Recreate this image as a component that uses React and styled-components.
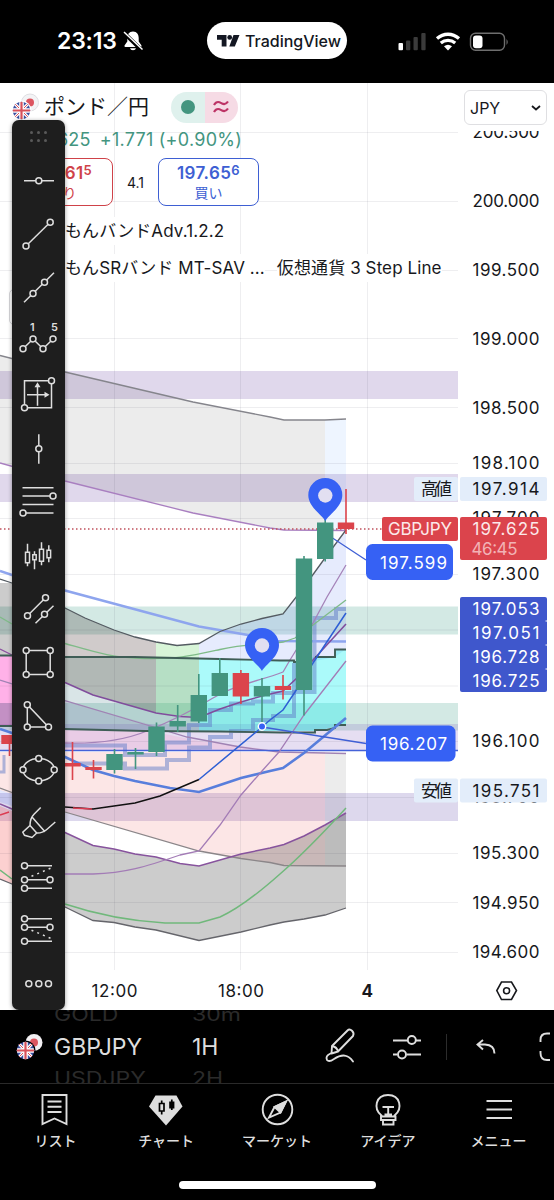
import styled, { createGlobalStyle } from 'styled-components';

const GREEN = '#43957f';
const RED = '#db444c';
const BLUE = '#3661f4';

const priceTicks = [
  ['200.500', 132.5],
  ['200.000', 201.5],
  ['199.500', 270.5],
  ['199.000', 339],
  ['198.500', 408],
  ['198.100', 463.5],
  ['197.700', 518.5],
  ['197.300', 574.5],
  ['196.100', 741.5],
  ['195.700', 797.5],
  ['195.300', 853.5],
  ['194.950', 903],
  ['194.600', 952.5],
];
const gridRows = [132.5, 201.5, 270.5, 338.5, 407.5, 463.5, 518.5, 574.5, 630, 686, 741.5, 797.5, 853.5, 902.5, 952.5];
const gridCols = [114.5, 240.5, 367.5];

const bands = [
  [371, 28, '#e0d8ec'],
  [474, 28, '#e0d8ec'],
  [606.5, 28, '#d3e9e4'],
  [703, 27.5, '#d3e9e4'],
  [724, 27, 'rgba(130, 90, 190, 0.2)'],
  [793, 28, '#ddd8ed'],
];

// x, body top, body bottom, wick top, wick bottom, rising
const candles = [
  [9.5, 735, 744, 735, 756, false],
  [72.5, 763, 766.5, 742, 780, false],
  [93.5, 767, 770, 760, 778.5, false],
  [114.5, 754, 770, 749, 773.5, true],
  [135.5, 752, 754.5, 748, 769, true],
  [156.5, 726.5, 752, 722.5, 756, true],
  [177.7, 721, 726.5, 705, 732, true],
  [198.8, 695, 721.5, 674, 723, true],
  [219.8, 673, 696, 658, 696, true],
  [240.9, 673, 696.5, 670, 704, false],
  [262, 686, 696.5, 678, 725, true],
  [283, 686, 690, 675, 699.5, false],
  [304, 558.5, 690, 556, 715.5, true],
  [325.2, 522.5, 559, 519, 561.5, true],
  [346, 522.5, 529, 489, 534, false],
];

const upperEnvelope = '65,608 85,618 114,630 135,637 156,642 177,645.5 199,643.5';
const upperRise = '199,643.5 220,631.5 241,624 262,618.5 283,614 304,587 325,558 346,530';
const midPurple = '65,682.5 93,695 114,701 156,713 180,716.5 199,717.5';
const lowerTop = '65,832.5 93,845.5 114,849 135,854 156,857 180,863.5 199,866 241,854 270,848 284,844.5 304,836 325,825 346,813';
const lowerBottom = '346,908 325,915 304,919 284,922 270,925 241,932 199,940.5 156,930 135,927 114,922.5 93,920.5 65,907';

function Pin({ x, y }) {
  return (
    <g transform={`translate(${x} ${y})`}>
      <path d="M0 25C-3 19-17 11-17 -1A17 17 0 0 1 17 -1C17 11 3 19 0 25Z" fill={BLUE} />
      <circle cy="-.5" r="7.2" fill="#e2dff1" />
    </g>
  );
}

function AxisText({ y, children, fill = '#17181c', ...rest }) {
  return (
    <text x="472.5" y={y + 5.8} fill={fill} textLength="67" {...rest}>{children}</text>
  );
}

function PriceChart() {
  return (
    <Plot viewBox="0 83 554 927">
      {bands.map(([y, h, fill]) => <rect key={y} y={y} width="458" height={h} fill={fill} />)}

      {/* grey and tinted clouds */}
      <polygon points="0,355.5 65,372 193,402 270,417 284,420 325,420 325,530.5 284,530 270,528 193,513 65,481 0,463" fill="rgba(0,0,0,.075)" />
      <rect x="325" y="420" width="21" height="110" fill="rgba(70,140,250,.09)" />
      <rect x="0" y="583" width="12" height="72" fill="rgba(0,0,0,.2)" />
      <rect x="0" y="655" width="12" height="72" fill="rgba(255,40,190,.36)" />
      <rect x="0" y="703" width="12" height="24" fill="rgba(70,70,120,.2)" />
      <polygon points={`${upperEnvelope.replace(' 177,645.5 199,643.5', '')} 156,713 114,701 93,695 65,682.5`} fill="rgba(40,20,20,.22)" />
      <polygon points="65,657 156,657 156,713 114,701 93,695 65,682.5" fill="rgba(20,90,70,.16)" />
      <polygon points="65,682.5 93,695 114,701 156,713 199,717.5 199,731 65,729" fill="rgba(30,100,110,.17)" />
      <polygon points="156,642 177,645.5 199,643.5 199,717.5 156,713" fill="rgba(90,215,90,.24)" />
      <polygon points="156,657 199,657 199,717.5 156,713" fill="rgba(30,130,110,.18)" />
      <polygon points={`${upperRise} 346,649 335,657 315,661 199,658`} fill="rgba(60,100,240,.13)" />
      <polygon points="199,658 294,661 315,657 335,657 335,649 346,649 346,725 315,731 199,731" fill="rgba(0,240,240,.33)" />
      <polygon points="65,729 150,731 200,741 279,751 65,751" fill="rgba(250,120,170,.17)" />
      <polygon points="65,701 156,726 150,731 65,729" fill="rgba(120,60,180,.1)" />
      <polygon points="0,752 325,752 325,866 284,865.5 270,862.5 241,858.5 199,851 65,812 0,790" fill="rgba(230,60,60,.13)" />
      <rect x="325" y="754" width="21" height="112" fill="rgba(0,0,0,.075)" />
      <polygon points="0,790 12,794 12,806 0,802" fill="rgba(60,90,240,.14)" />
      <polygon points="0,806 12,811 12,884 0,879" fill="rgba(240,50,50,.23)" />
      <polygon points={`${lowerTop} ${lowerBottom}`} fill="rgba(0,0,0,.2)" />

      <g stroke="#2a2a40" strokeOpacity=".08">
        {gridRows.map(y => <path key={y} d={`M0 ${y}H458`} />)}
        {gridCols.map(x => <path key={x} d={`M${x} 83V970`} />)}
      </g>

      {/* stepped averages */}
      <g fill="none" stroke="#5f7cc8" strokeOpacity=".5" strokeWidth="4">
        <path d="M65 745.5H125V755H165V742.5H189V725H210V710H231V703.5H253V701.5H273V693H294V663" />
        <path d="M73 763.5H125V768.5H167V760H189V747.5H210V737H231V731H253V720H273V716H294V692H314.5V618H336V609H346" />
        <path d="M0 772H4V755" strokeWidth="3" />
      </g>

      <g fill="none" strokeWidth="1.3">
        <polyline points="0,355.5 65,372 193,402 270,417 284,420 325,420 346,419" stroke="#85858c" />
        <polyline points="0,463 65,481 193,513 270,528 284,530 346,530.5" stroke="#a97fc0" />
        <polyline points="0,571 12,575 65,590.5 199,626.5 248,635 275,641 346,641.5" stroke="#8ea5ee" strokeWidth="2.4" />
        <polyline points={`0,579 12,583 ${upperEnvelope} ${upperRise}`} stroke="#545b62" />
        <path d="M0 617 12 624M65 643.5C95 652 112 658 145 658.500S190 656 220 649.500S265 645 283 642L295 638 313 625 346 600" stroke="#7fbb88" />
        <polyline points="0,649 12,655 " stroke="#8d4fa0" />
        <polyline points={`${midPurple} 220,709 241,702 262,696 283,691 298,677 313,660 346,624`} stroke="#804d9c" strokeWidth="1.6" />
        <polyline points="0,680 65,700.7 147,725 187,737 240,747 279,752 346,753.5" stroke="#a083b4" />
        <path d="M65 743C100 744 125 740 147 731S190 712 213 698S260 681 283 672L290 660 313 623 327 597 346 565" stroke="#a583b9" />
        <path d="M0 655.500H12M65 657H134L220 659 280 660.500H294V662H304M315 657H335V649.500H346" stroke="#3f5d56" strokeWidth="1.9" />
        <path d="M0 726H12M65 729L145 731 220 731.500 280 732.500H315V730H327L335 728V725H346" stroke="#3f5d56" strokeWidth="1.9" />
        <path d="M0 750.500H458" stroke="#4562d8" strokeWidth="1.6" />
        <polyline points="0,729 12,733 65,757 93,770 114,776 135,781 170,788 199,792 220,785 241,778 270,771 283,768 304,753 346,718" stroke="#587edc" strokeWidth="2.6" />
        <polyline points="65,807 93,809 114,806 135,803 160,796 199,779.5" stroke="#111" strokeWidth="1.5" />
        <path d="M73 808 92 809M0 815 9 812" stroke="#dc3b51" strokeWidth="1.6" />
        <polyline points="199,779.5 262,727 270,720 283,710 295,692 313,663 346,613" stroke="#2e5fd4" strokeWidth="1.5" />
        <polyline points="0,788 65,812 199,851 241,858.5 270,862.5 284,865.5 346,866" stroke="#8b8689" />
        <polyline points={`0,804 12,809 ${lowerTop}`} stroke="#87539d" strokeWidth="1.5" />
        <polyline points="0,879 12,884 65,907 93,920.5 114,922.5 135,927 156,930 199,940.5 241,932 270,925 284,922 304,919 325,915 346,908" stroke="#65656b" />
        <path d="M65 874H93C125 873 145 867 180 855L199 851 220 825 241 795 262 771 279 752 304 715 325 688 346 661" stroke="#a37cb6" />
        <path d="M0 870 12 879M65 904C98 915 130 921 165 923H199L220 917C240 908 262 890 280 874C302 855 325 831 346 808" stroke="#70b87b" strokeWidth="1.5" />
        <path d="M262 727 366 743.500M331 537 366 560" stroke="#3f5fd5" />
        <path d="M0 529H382" stroke="#c0505c" strokeDasharray="1.5 2.5" strokeWidth="1.5" />
      </g>

      {candles.map(([x, top, bottom, high, low, up]) => (
        <g key={x} fill={up ? GREEN : RED}>
          <rect x={x - 0.8} y={high} width="1.6" height={low - high} />
          <rect x={x - 8.2} y={top} width="16.4" height={bottom - top} />
        </g>
      ))}

      <Pin x={325.3} y={496} />
      <Pin x={262} y={646} />
      <circle cx="262" cy="726.5" r="3.7" fill={BLUE} stroke="#fff" strokeWidth="1.4" />

      <rect x="366" y="544" width="87" height="36" rx="6.500" fill={BLUE} />
      <rect x="366" y="725.500" width="89.500" height="36" rx="6.500" fill={BLUE} />
      <text x="380" y="568.5" fill="#fff" textLength="67">197.599</text>
      <text x="380" y="750" fill="#fff" textLength="67">196.207</text>

      {priceTicks.map(([label, y]) => <AxisText key={label} y={y}>{label}</AxisText>)}
      <rect x="460" y="83" width="94" height="48" fill="#fff" />

      <rect x="414" y="477" width="44" height="24" rx="2" fill="#e3edfa" />
      <rect x="460" y="477" width="87" height="24" rx="2" fill="#e3edfa" />
      <text x="421" y="495" fill="#17181c" textLength="31">高値</text>
      <AxisText y={489.5}>197.914</AxisText>
      <rect x="414" y="778.500" width="44" height="24" rx="2" fill="#e3edfa" />
      <rect x="460" y="778.500" width="87" height="24" rx="2" fill="#e3edfa" />
      <text x="421" y="797" fill="#17181c" textLength="31">安値</text>
      <AxisText y={791}>195.751</AxisText>

      <rect x="382" y="517" width="76" height="24" rx="2" fill={RED} />
      <rect x="460" y="517" width="87" height="43" rx="2" fill={RED} />
      <text x="388" y="535" fill="#fbe9ea" textLength="64">GBPJPY</text>
      <AxisText y={529.5} fill="#fbe9ea">197.625</AxisText>
      <text x="471.5" y="555" fill="#f2b3b6" textLength="46">46:45</text>

      <rect x="460" y="597" width="87" height="95" rx="2" fill="#3f57cc" />
      <AxisText y={609.5} fill="#fff">197.053</AxisText>
      <AxisText y={633.5} fill="#fff">197.051</AxisText>
      <AxisText y={657.5} fill="#fff">196.728</AxisText>
      <AxisText y={681.5} fill="#fff">196.725</AxisText>
      <path d="M545.500 621H547M545.500 645H547M545.500 669H547" stroke="#fff" />

      <text x="91.500" y="997" fill="#17181c" textLength="46">12:00</text>
      <text x="218" y="997" fill="#17181c" textLength="46">18:00</text>
      <text x="361.500" y="997" fill="#17181c" fontWeight="700">4</text>
      <g fill="none" stroke="#17181c" strokeWidth="1.6">
        <path d="M501.500 982H511.500L516.500 990.500 511.500 999.500H501.500L496.800 990.500Z" />
        <circle cx="506.600" cy="990.700" r="3" />
      </g>
    </Plot>
  );
}

function Flags({ dark }) {
  return (
    <FlagSvg viewBox="0 0 28 28" $dark={dark}>
      <circle cx="18" cy="9.500" r="8.500" fill={dark ? '#f3f0f3' : '#f3f3f5'} stroke={dark ? 'none' : '#dfdfe3'} />
      <circle cx="18" cy="9.500" r="4" fill="#dc5560" />
      <circle cx="9.500" cy="17.500" r="10" fill={dark ? '#000' : '#fff'} />
      <clipPath id={dark ? 'ukDark' : 'ukLight'}><circle cx="9.500" cy="17.500" r="8.700" /></clipPath>
      <g clipPath={`url(#${dark ? 'ukDark' : 'ukLight'})`}>
        <rect y="8" width="20" height="20" fill="#3b4fa0" />
        <path d="M1 9 18 26M18 9 1 26" stroke="#fff" strokeWidth="3" />
        <path d="M1 9 18 26M18 9 1 26" stroke="#d8505a" strokeWidth="1" />
        <path d="M9.500 8V27M0 17.500H19" stroke="#fff" strokeWidth="4.600" />
        <path d="M9.500 8V27M0 17.500H19" stroke="#d8505a" strokeWidth="2.200" />
      </g>
    </FlagSvg>
  );
}

function Dots({ at }) {
  return at.map(([x, y]) => <circle key={`${x},${y}`} cx={x} cy={y} r="3" fill="#1e1e1e" />);
}

// every drawing tool is centred on 0,0
const tools = [
  { path: 'M-14.500 0H15.500', dots: [[0.3, 0]] },
  { path: 'M-12.500 11.300 11.700 -12.500', dots: [[-12.5, 11.3], [11.7, -12.5]] },
  { path: 'M-14.500 14.500 15.500 -15', dots: [[-5.5, 5.7], [6, -5.5]] },
  { path: 'M-15.500 7-5.500-2.800 4.500 7 14.500-2.800', dots: [[-15.5, 7], [-5.5, -2.8], [4.5, 7], [14.5, -2.8]], labels: [['1', -8.5], ['5', 12.5]] },
  { path: 'M-14-14H13V13H-14ZM-1 11V-10M-11.500 0H9', dots: [[13, -14], [-14, 13]], solid: 'M-1-12.500 2-7.500H-4ZM11 0 6-3V3Z' },
  { path: 'M.300-14.500V15', dots: [[0.3, 0]] },
  { path: 'M-16-14H15M-16-5.700H15M-16 2.700H15M-16 11.300H15', dots: [[14.5, -5.7], [-15.5, 11.3]] },
  { path: 'M-11-12V-4M-11 7.500V10.500M-13-3.500H-9V7H-13ZM-4-4.500V-1M-4 4V13.500M-5.700-1H-2.300V4H-5.700ZM3-13.500V-6.500M3 5.500V9.500M1-6.500H5V5.500H1ZM10.300-10.500V-5.500M10.300 2V6.500M8.500-5.500H12.100V2H8.500Z', dots: [] },
  { path: 'M-11 7 7-11M-3 14.500 15-3', dots: [[-11, 7], [7, -11], [6, 5.5]] },
  { path: 'M-12.300-12.300H11.700V11.700H-12.300Z', dots: [[-12.3, -12.3], [11.7, -12.3], [11.7, 11.7], [-12.3, 11.7]] },
  { path: 'M-11.200-11V11.300H10Z', dots: [[-11.2, -11], [-11.2, 11.3], [10, 11.3]] },
  { path: 'M-15.500 0A15.700 11.200 0 0 1 15.900 0A15.700 11.200 0 0 1-15.500 0Z', dots: [[-15.5, 0], [0.2, -11.2], [15.7, 0], [0.2, 11.2]] },
  { path: 'M2.200-15.300-4.500-8.500Q-8.500-4.500-8.500 2.700L-15.700 9.500-14 12.500-6.500 14.700-1.800 10.300-8.500 2.700M-6.300-5.500 6.500 9M-1.800 10.300Q4 10.500 8 7L16.800-.7', dots: [] },
  { path: 'M-14-11H13.500M-14 3H11.500M-14 11.500H13.500', dots: [[-14, -11], [-14, 3], [11.5, 3], [-14, 11.5]], dotted: 'M-7-.5 12-8.500' },
  { path: 'M-14-11H13.500M-14-2.500H11.500M-14 11.500H13.500', dots: [[-14, -11], [-14, -2.5], [11.5, -2.5], [-14, 11.5]], dotted: 'M-7 .5 12 8.500' },
  { path: '', dots: [[-9.7, 0], [0.3, 0], [10, 0]] },
];

function DrawingTools() {
  return (
    <ToolPanel>
      <Handle viewBox="0 0 53 34" fill="#5a5a5a">
        {[19.5, 26.5, 33.5].map(x => [12.5, 20.5].map(y => <circle key={x + y} cx={x} cy={y} r="1.5" />))}
      </Handle>
      {tools.map(({ path, dots, labels, solid, dotted }, i) => (
        <ToolIcon key={i} viewBox="-26.5 -26.75 53 53.5">
          <path d={path} />
          {dotted && <path d={dotted} strokeDasharray="2 4.200" />}
          {solid && <path d={solid} fill="#dedede" stroke="none" />}
          <Dots at={dots} />
          {labels && labels.map(([label, x]) => (
            <text key={label} x={x} y="-10.500" fill="#dedede" stroke="none" fontSize="11" fontWeight="600">{label}</text>
          ))}
        </ToolIcon>
      ))}
    </ToolPanel>
  );
}

function StatusBar() {
  return (
    <Status>
      <Clock>
        <time>23:13</time>
        <svg width="20" height="20" viewBox="0 0 20 20">
          <path d="M10 .5C6 .5 4.300 3.500 4.300 7V10.500L1.500 14.500Q1.200 16 2.500 16H17.500Q18.800 16 18.500 14.500L15.700 10.500V7C15.700 3.500 14 .5 10 .5ZM7 17.300H13Q12.500 19.300 10 19.300T7 17.300Z" fill="#fff" />
          <path d="M.5 1.500 19 19.500" stroke="#000" strokeWidth="4" />
          <path d="M1 1 19.500 18.500" stroke="#fff" strokeWidth="1.500" />
        </svg>
      </Clock>
      <Island>
        <svg width="23" height="12" viewBox="0 0 23 12" fill="#131722">
          <path d="M0 0H9.500V11.500H4.700V4.700H0ZM16.500 0H22.500L17.800 11.500H12.300Z" />
          <circle cx="12.700" cy="2.400" r="2.400" />
        </svg>
        <Brand>TradingView</Brand>
      </Island>
      <Signals viewBox="0 0 112 20">
        <rect x="1.500" y="11" width="4.500" height="7.300" rx="1" fill="#fff" />
        <g fill="#3b3b3b">
          <rect x="9" y="8.500" width="4.300" height="9.800" rx="1" />
          <rect x="16.500" y="5" width="4.300" height="13.300" rx="1" />
          <rect x="24.300" y="1" width="4.300" height="17.300" rx="1" />
        </g>
        <g fill="none" stroke="#fff" strokeWidth="3.300">
          <path d="M40 6.500C46.500 .8 55.500 .8 62 6.500M43.800 11C48 7.500 54 7.500 58.200 11" />
        </g>
        <path d="M47 14.200Q51 11.200 55 14.200L51 18.500Z" fill="#fff" />
        <rect x="73.500" y="1.300" width="34" height="17" rx="5" fill="none" stroke="#6e6e6e" strokeWidth="1.400" />
        <rect x="76" y="3.600" width="9.500" height="12.600" rx="3" fill="#fff" />
        <path d="M109.500 7Q112 10 109.500 13Z" fill="#6e6e6e" />
      </Signals>
    </Status>
  );
}

function Legend() {
  return (
    <LegendBox>
      <TitleRow>
        <Flags />
        <Title>ポンド／円</Title>
        <StatusPill>
          <PillHalf $bg="#dff1ed"><Bullet /></PillHalf>
          <PillHalf $bg="#f6dbe5">
            <svg width="16" height="14" viewBox="0 0 16 14" fill="none" stroke="#bd3466" strokeWidth="2.200">
              <path d="M1 5C4 0 7 2.500 9 3.500S13 4.500 15 1.500M1 12C4 7 7 9.500 9 10.500S13 11.500 15 8.500" />
            </svg>
          </PillHalf>
        </StatusPill>
      </TitleRow>
      <Change><span>197.625</span><span>+1.771 (+0.90%)</span></Change>
      <Quotes>
        <Quote $color="#cf4249">
          <Amount>197.61<small>5</small></Amount>
          <Side>売り</Side>
        </Quote>
        <Spread>4.1</Spread>
        <Quote $color="#3e5fd3">
          <Amount>197.65<small>6</small></Amount>
          <Side>買い</Side>
        </Quote>
      </Quotes>
      <Indicator><Name $track="0.1px">もんバンドAdv.1.2.2</Name></Indicator>
      <Indicator>
        <Name $track="0.1px">もんSRバンド MT-SAV ...</Name>
        <Name $track="0.1px">仮想通貨 3 Step Line</Name>
      </Indicator>
    </LegendBox>
  );
}

function BottomBar() {
  return (
    <Bar>
      <Flags dark />
      <Wheel $width={138}>
        <Faded>GOLD</Faded>
        <Current>GBPJPY</Current>
        <Faded>USDJPY</Faded>
      </Wheel>
      <Wheel $width={130}>
        <Faded>30m</Faded>
        <Current>1H</Current>
        <Faded>2H</Faded>
      </Wheel>
      <BarIcons viewBox="0 0 231 73" fill="none" stroke="#dedede" strokeWidth="1.900">
        <path d="M9 36 24.500 20.500Q26.500 18.500 29 20.800T30 26L15 41.500 8.500 43.500ZM9 36Q14 37 15 41.500" strokeLinejoin="round" />
        <path d="M7.500 43.500Q2 46 4 50Q6 52.500 11 49Q23 41 30 51.500" strokeLinecap="round" />
        <path d="M70 30.500H84.500M93 30.500H98M70 44.500H74.500M83.500 44.500H98" />
        <circle cx="88.800" cy="30" r="4" />
        <circle cx="79" cy="44.500" r="4" />
        <path d="M123.500 24V50" stroke="#2c2c2c" strokeWidth="1" />
        <path d="M160 30 154.500 34.500 160 39.500M154.500 34.500H162Q171.500 35 171.500 43.500" />
        <path d="M217.500 32V30Q217.500 23.500 224 23.500H227M217.500 41V43Q217.500 50 224 50H227" />
      </BarIcons>
    </Bar>
  );
}

const navItems = [
  {
    label: 'リスト',
    icon: <path d="M5.500 3H29.500V32L17.500 26.500 5.500 32ZM10.500 9.500H24.500M10.500 14.800H24.500M10.500 20H24.500" />,
  },
  {
    label: 'チャート',
    icon: (
      <>
        <path d="M7.500 3.500H28.500L34.500 14.500 18 33.500 1 14.500Z" fill="#dedede" stroke="none" />
        <path d="M13.700 8.500V11.500M13.700 19V22.500M11.500 11.500H16V19H11.500ZM23.800 7.500V18" stroke="#000" strokeWidth="1.700" />
        <rect x="21.200" y="9.500" width="5.200" height="7" fill="#000" stroke="none" />
      </>
    ),
  },
  {
    label: 'マーケット',
    icon: (
      <>
        <circle cx="18.500" cy="17.500" r="14.800" />
        <path d="M27 9.500 15.500 15 10 25.500 21.500 20.500Z" />
        <path d="M27 9.500 15.500 15 21.500 20.500Z" fill="#dedede" />
      </>
    ),
  },
  {
    label: 'アイデア',
    icon: (
      <>
        <path d="M11.500 24.500V23.500C3 17 5.500 3 18 3S33 17 24.500 23.500V24.500ZM11 24.500H25.500V28H11ZM13 28H23.500V32.500H13ZM12.500 15H24M18.200 15V22.500M14.500 22.500H22" />
      </>
    ),
  },
  {
    label: 'メニュー',
    icon: <path d="M5.500 9H31M5.500 17.500H31M5.500 26H31" />,
  },
];

export default function App() {
  return (
    <Screen>
      <GlobalStyle />
      <StatusBar />
      <ChartPane>
        <PriceChart />
        <Currency>
          JPY
          <svg width="10" height="6" viewBox="0 0 10 6" fill="none" stroke="#17181c" strokeWidth="1.800"><path d="M1 1 5 4.500 9 1" /></svg>
        </Currency>
        <CollapseButton />
        <Legend />
        <DrawingTools />
      </ChartPane>
      <BottomBar />
      <Nav>
        {navItems.map(({ label, icon }) => (
          <NavItem key={label}>
            <svg width="36" height="35" viewBox="0 0 36 35" fill="none" stroke="#dedede" strokeWidth="1.900">{icon}</svg>
            {label}
          </NavItem>
        ))}
      </Nav>
      <HomeArea><HomeIndicator /></HomeArea>
    </Screen>
  );
}

const GlobalStyle = createGlobalStyle`
  body {
    margin: 0;
    background: #000;
    font-family: Inter, "Noto Sans CJK JP", sans-serif;
  }
  * {
    box-sizing: border-box;
  }
`;
const Screen = styled.div`
  width: 554px;
  height: 1200px;
  display: flex;
  flex-direction: column;
  overflow: hidden;
  background: #000;
`;
const Status = styled.header`
  height: 83px;
  padding: 22px 45px 0 57px;
  display: flex;
  align-items: flex-start;
  color: #fff;
`;
const Clock = styled.div`
  width: 150px;
  height: 38px;
  display: flex;
  align-items: center;
  gap: 6px;
  font-size: 23px;
  font-weight: 600;
  letter-spacing: -0.2px;
`;
const Island = styled.div`
  width: 140px;
  height: 37px;
  border-radius: 19px;
  background: #fff;
  color: #131722;
  display: flex;
  align-items: center;
  gap: 5px;
  padding-left: 10px;
`;
const Brand = styled.span`
  font-size: 16px;
  font-weight: 500;
  white-space: nowrap;
`;
const Signals = styled.svg`
  width: 112px;
  height: 20px;
  margin: 10px 0 0 auto;
`;
const ChartPane = styled.main`
  position: relative;
  height: 927px;
  flex: none;
  background: #fff;
`;
const Plot = styled.svg`
  display: block;
  width: 554px;
  height: 927px;
  font-size: 17px;
`;
const Currency = styled.div`
  position: absolute;
  top: 7px;
  right: 7px;
  width: 83px;
  height: 35px;
  padding: 0 5px;
  display: flex;
  align-items: center;
  justify-content: space-between;
  border: 1px solid #dfdfe2;
  border-radius: 6px;
  background: #fff;
  color: #17181c;
  font-size: 16px;
`;
const CollapseButton = styled.div`
  position: absolute;
  top: 206px;
  left: 9px;
  width: 30px;
  height: 36px;
  border: 1px solid #d5d5d8;
  border-radius: 5px;
`;
const LegendBox = styled.div`
  position: absolute;
  top: 7px;
  left: 12px;
  display: flex;
  flex-direction: column;
  align-items: flex-start;
  color: #17181c;
`;
const TitleRow = styled.div`
  height: 34px;
  display: flex;
  align-items: center;
`;
const Title = styled.h1`
  width: 126px;
  margin: 0 0 0 4px;
  font-size: 21px;
  font-weight: 400;
  line-height: 34px;
  white-space: nowrap;
`;
const StatusPill = styled.div`
  width: 67px;
  height: 31px;
  margin-left: 1px;
  border-radius: 16px;
  overflow: hidden;
  display: flex;
`;
const PillHalf = styled.div`
  flex: 1;
  display: flex;
  align-items: center;
  justify-content: center;
  background: ${p => p.$bg};
`;
const Bullet = styled.span`
  width: 14px;
  height: 14px;
  border-radius: 50%;
  background: ${GREEN};
`;
const Change = styled.div`
  width: 230px;
  height: 30px;
  display: flex;
  justify-content: flex-end;
  align-items: center;
  gap: 9px;
  color: ${GREEN};
  font-size: 18px;
  letter-spacing: 0.25px;
  white-space: nowrap;
`;
const Quotes = styled.div`
  display: flex;
  align-items: center;
  margin-top: 4px;
`;
const Quote = styled.div`
  width: 101px;
  height: 48px;
  padding-top: 3px;
  border: 1.5px solid;
  border-radius: 8px;
  color: ${p => p.$color};
  background: #fff;
  display: flex;
  flex-direction: column;
  align-items: center;
`;
const Amount = styled.div`
  display: flex;
  font-size: 17px;
  font-weight: 600;
  line-height: 22px;
  letter-spacing: 0.4px;
  small {
    font-size: 13px;
    line-height: 17px;
  }
`;
const Side = styled.div`
  font-size: 14px;
  line-height: 18px;
`;
const Spread = styled.div`
  width: 45px;
  text-align: center;
  font-size: 14px;
`;
const Indicator = styled.div`
  height: 37px;
  padding-left: 53px;
  display: flex;
  align-items: center;
  gap: 12px;
  &:nth-child(4) {
    margin-top: 6px;
  }
`;
const Name = styled.span`
  font-size: 17px;
  line-height: 28px;
  letter-spacing: ${p => p.$track};
  white-space: pre;
  background: #fff;
`;
const ToolPanel = styled.aside`
  position: absolute;
  top: 37px;
  left: 12px;
  width: 53px;
  height: 890px;
  display: flex;
  flex-direction: column;
  border-radius: 7px;
  background: #1e1e1e;
  box-shadow: 0 1px 4px rgba(0, 0, 0, 0.4);
`;
const Handle = styled.svg`
  width: 53px;
  height: 34px;
  flex: none;
`;
const ToolIcon = styled.svg`
  width: 53px;
  height: 53.5px;
  flex: none;
  fill: none;
  stroke: #dedede;
  stroke-width: 1.5;
`;
const FlagSvg = styled.svg`
  width: 28px;
  height: 28px;
  flex: none;
  margin-left: ${p => (p.$dark ? '16px' : '0')};
`;
const Bar = styled.section`
  height: 73px;
  flex: none;
  display: flex;
  align-items: center;
  overflow: hidden;
`;
const Wheel = styled.div`
  width: ${p => p.$width}px;
  height: 73px;
  padding-left: 10px;
  display: flex;
  flex-direction: column;
  justify-content: center;
  overflow: hidden;
  font-size: 23px;
`;
const Current = styled.div`
  flex: none;
  line-height: 38px;
  color: #dedede;
`;
const Faded = styled.div`
  flex: none;
  line-height: 27px;
  color: #2b2b2b;
  transform: scaleY(0.8);
`;
const BarIcons = styled.svg`
  width: 231px;
  height: 73px;
  margin-left: auto;
  flex: none;
`;
const Nav = styled.nav`
  height: 88px;
  flex: none;
  display: grid;
  grid-template-columns: repeat(5, 1fr);
  border-top: 1px solid #2a2a2a;
`;
const NavItem = styled.div`
  display: flex;
  flex-direction: column;
  align-items: center;
  padding-top: 8px;
  gap: 3px;
  color: #dedede;
  font-size: 14px;
  font-weight: 500;
  line-height: 22px;
`;
const HomeArea = styled.footer`
  flex: 1;
  display: flex;
  justify-content: center;
  align-items: flex-start;
  padding-top: 10px;
`;
const HomeIndicator = styled.div`
  width: 197px;
  height: 8px;
  border-radius: 4px;
  background: #fff;
`;
